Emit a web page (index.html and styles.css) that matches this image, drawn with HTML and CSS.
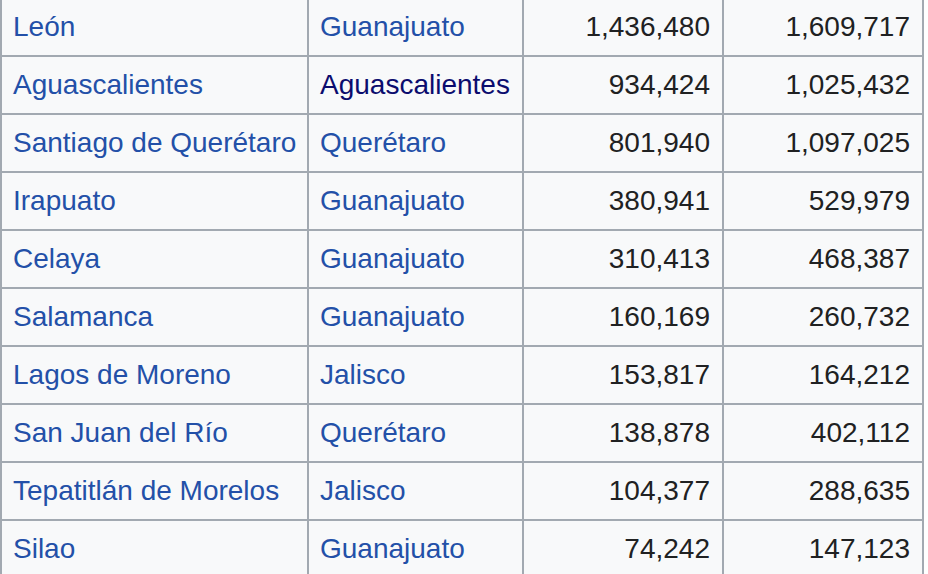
FILE: index.html
```html
<!DOCTYPE html>
<html lang="es">
<head>
<meta charset="utf-8">
<title>Ciudades</title>
<link rel="stylesheet" href="styles.css">
</head>
<body>
<table class="cities">
  <colgroup>
    <col class="c-city">
    <col class="c-state">
    <col class="c-num">
    <col class="c-num2">
  </colgroup>
  <tbody>
    <tr><td><a href="#">León</a></td><td><a href="#">Guanajuato</a></td><td class="num">1,436,480</td><td class="num">1,609,717</td></tr>
    <tr><td><a href="#">Aguascalientes</a></td><td><a href="#" class="visited">Aguascalientes</a></td><td class="num">934,424</td><td class="num">1,025,432</td></tr>
    <tr><td><a href="#">Santiago de Querétaro</a></td><td><a href="#">Querétaro</a></td><td class="num">801,940</td><td class="num">1,097,025</td></tr>
    <tr><td><a href="#">Irapuato</a></td><td><a href="#">Guanajuato</a></td><td class="num">380,941</td><td class="num">529,979</td></tr>
    <tr><td><a href="#">Celaya</a></td><td><a href="#">Guanajuato</a></td><td class="num">310,413</td><td class="num">468,387</td></tr>
    <tr><td><a href="#">Salamanca</a></td><td><a href="#">Guanajuato</a></td><td class="num">160,169</td><td class="num">260,732</td></tr>
    <tr><td><a href="#">Lagos de Moreno</a></td><td><a href="#">Jalisco</a></td><td class="num">153,817</td><td class="num">164,212</td></tr>
    <tr><td><a href="#">San Juan del Río</a></td><td><a href="#">Querétaro</a></td><td class="num">138,878</td><td class="num">402,112</td></tr>
    <tr><td><a href="#">Tepatitlán de Morelos</a></td><td><a href="#">Jalisco</a></td><td class="num">104,377</td><td class="num">288,635</td></tr>
    <tr><td><a href="#">Silao</a></td><td><a href="#">Guanajuato</a></td><td class="num">74,242</td><td class="num">147,123</td></tr>
  </tbody>
</table>
</body>
</html>
```
FILE: styles.css
```css
html, body {
  margin: 0;
  padding: 0;
  background: #ffffff;
}

.cities {
  margin-top: -3px;
  border-collapse: separate;
  border-spacing: 0;
  table-layout: fixed;
  width: 924px;
  background: #f8f9fa;
  font-family: "Liberation Sans", Arial, sans-serif;
  font-size: 28px;
  color: #202122;
  border-right: 2px solid #a2a9b1;
}

.c-city { width: 307px; }
.c-state { width: 215px; }
.c-num { width: 200px; }
.c-num2 { width: 200px; }

.cities td {
  box-sizing: border-box;
  height: 58px;
  padding: 0 10px 0 11px;
  border-left: 2px solid #a2a9b1;
  border-top: 2px solid #a2a9b1;
  vertical-align: middle;
  white-space: nowrap;
  line-height: 32px;
}

.cities td.num {
  text-align: right;
  padding-right: 12px;
}

.cities a {
  color: #2350a8;
  text-decoration: none;
}

.cities a.visited {
  color: #0b0c6e;
}
```
